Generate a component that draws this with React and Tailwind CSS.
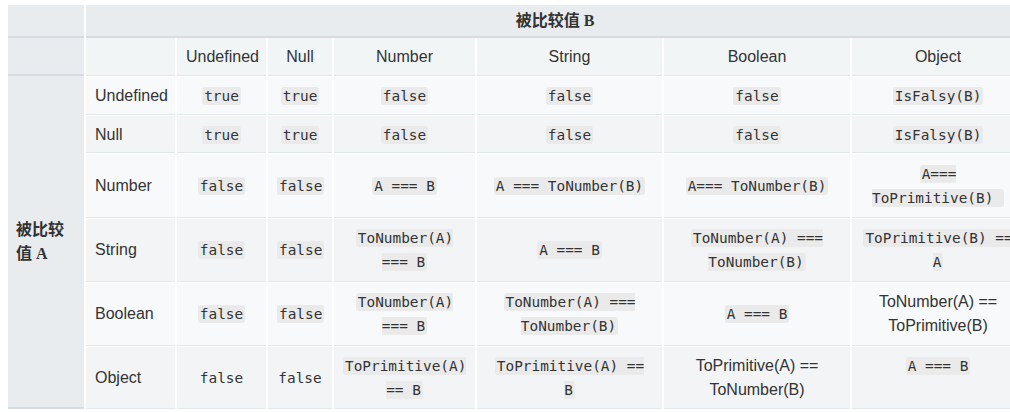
import React from "react";

const C = ({ children }) => (
  <code className="font-['DejaVu_Sans_Mono',monospace] text-[14.4px] bg-[#eaeaea] text-[#333] rounded-[3px] px-[2px] py-[1px]">
    {children}
  </code>
);
const M = ({ children }) => (
  <span className="font-['DejaVu_Sans_Mono',monospace] text-[14.4px] text-[#333]">{children}</span>
);

const rows = [
  {
    label: "Undefined",
    pad: "pt-[7px] pb-[6px]",
    bg: "bg-[#f8f9fa]",
    cells: [<C>true</C>, <C>true</C>, <C>false</C>, <C>false</C>, <C>false</C>, <C>IsFalsy(B)</C>],
  },
  {
    label: "Null",
    pad: "pt-[7px] pb-[5px]",
    bg: "bg-[#f2f4f5]",
    cells: [<C>true</C>, <C>true</C>, <C>false</C>, <C>false</C>, <C>false</C>, <C>IsFalsy(B)</C>],
  },
  {
    label: "Number",
    pad: "pt-[8px] pb-[7px]",
    bg: "bg-[#f8f9fa]",
    cells: [
      <C>false</C>,
      <C>false</C>,
      <C>A === B</C>,
      <C>A === ToNumber(B)</C>,
      <C>A=== ToNumber(B)</C>,
      <C>{"A=== ToPrimitive(B)\u00a0"}</C>,
    ],
  },
  {
    label: "String",
    pad: "pt-[7px] pb-[7px]",
    bg: "bg-[#f2f4f5]",
    cells: [
      <C>false</C>,
      <C>false</C>,
      <C>ToNumber(A) === B</C>,
      <C>A === B</C>,
      <C>ToNumber(A) === ToNumber(B)</C>,
      <C>ToPrimitive(B) == A</C>,
    ],
  },
  {
    label: "Boolean",
    pad: "pt-[7px] pb-[7px]",
    bg: "bg-[#f8f9fa]",
    cells: [
      <C>false</C>,
      <C>false</C>,
      <C>ToNumber(A) === B</C>,
      <C>ToNumber(A) === ToNumber(B)</C>,
      <C>A === B</C>,
      <span>ToNumber(A) == ToPrimitive(B)</span>,
    ],
  },
  {
    label: "Object",
    pad: "pt-[7px] pb-[6px]",
    bg: "bg-[#f2f4f5]",
    topLast: true,
    cells: [
      <M>false</M>,
      <M>false</M>,
      <C>ToPrimitive(A) == B</C>,
      <C>ToPrimitive(A) == B</C>,
      <span>ToPrimitive(A) == ToNumber(B)</span>,
      <C>A === B</C>,
    ],
  },
];

const headers = ["Undefined", "Null", "Number", "String", "Boolean", "Object"];

export default function App() {
  const thSide =
    "bg-[#e8ecef] border-b-2 border-b-[#d4dce2] text-left px-[8px] font-bold text-[#333] font-['Liberation_Serif','Noto_Sans_CJK_SC',serif] text-[16px] leading-6 align-middle";
  const tdBase =
    "border-b border-b-[#e2e7ea] px-[9px] leading-6 text-[16px] text-[#333] text-center align-middle";
  return (
    <div className="w-[1010px] h-[412px] overflow-hidden bg-white font-['Liberation_Sans',Arial,sans-serif]">
      <table className="table-fixed w-[1020px] ml-[6px] mt-[5px] border-separate border-spacing-x-[2px] border-spacing-y-0">
        <colgroup>
          <col className="w-[76px]" />
          <col className="w-[89px]" />
          <col className="w-[89px]" />
          <col className="w-[64px]" />
          <col className="w-[141px]" />
          <col className="w-[185px]" />
          <col className="w-[186px]" />
          <col className="w-[172px]" />
        </colgroup>
        <tbody>
          <tr>
            <th className={`${thSide} pt-[4px] pb-[3px]`}></th>
            <th
              colSpan={7}
              className="bg-[#e8ecef] border-b-2 border-b-[#d4dce2] pt-[4px] pb-[3px] text-center font-bold text-[#333] font-['Liberation_Serif','Noto_Sans_CJK_SC',serif] text-[16px] leading-6"
            >
              被比较值 B
            </th>
          </tr>
          <tr>
            <th className={thSide}></th>
            <td className={`${tdBase} bg-[#f2f5f6] pt-[7px] pb-[6px]`}></td>
            {headers.map((h) => (
              <td key={h} className={`${tdBase} bg-[#f2f5f6] pt-[7px] pb-[6px]`}>
                {h}
              </td>
            ))}
          </tr>
          {rows.map((r, i) => (
            <tr key={r.label}>
              {i === 0 && (
                <th rowSpan={6} className={thSide}>
                  被比较值 A
                </th>
              )}
              <td className={`${tdBase} border-t border-t-white ${r.bg} ${r.pad} !text-left`}>
                {r.label}
              </td>
              {r.cells.map((c, j) => (
                <td
                  key={j}
                  className={`${tdBase} border-t border-t-white ${r.bg} ${r.pad} ${
                    r.topLast && j === 5 ? "!align-top" : ""
                  }`}
                >
                  {c}
                </td>
              ))}
            </tr>
          ))}
        </tbody>
      </table>
    </div>
  );
}
